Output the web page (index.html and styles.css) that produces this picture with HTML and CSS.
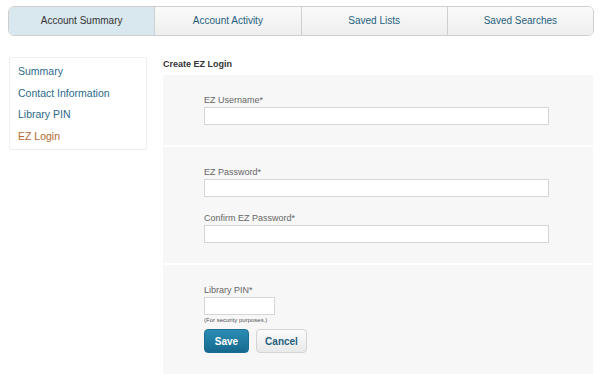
FILE: index.html
```html
<!DOCTYPE html>
<html>
<head>
    <title>Create EZ Login</title>
    <meta charset="utf-8">
    <link rel="stylesheet" href="styles.css">
</head>
<body>
    <div class="tabs">
        <div class="tab active">Account Summary</div>
        <div class="tab">Account Activity</div>
        <div class="tab">Saved Lists</div>
        <div class="tab">Saved Searches</div>
    </div>
    <div class="main">
        <div class="side">
            <a class="side-item">Summary</a>
            <a class="side-item">Contact Information</a>
            <a class="side-item">Library PIN</a>
            <a class="side-item current">EZ Login</a>
        </div>
        <div class="content">
            <div class="title">Create EZ Login</div>
            <div class="panel">
                <div class="section">
                    <label class="label">EZ Username*</label>
                    <input type="text" class="field"/>
                </div>
                <div class="section">
                    <label class="label">EZ Password*</label>
                    <input type="password" class="field"/>
                    <label class="label second">Confirm EZ Password*</label>
                    <input type="password" class="field"/>
                </div>
                <div class="section last">
                    <label class="label">Library PIN*</label>
                    <input type="password" class="field pin"/>
                    <div class="note">(For security purposes.)</div>
                    <div class="buttons">
                        <button class="btn save">Save</button>
                        <button class="btn cancel">Cancel</button>
                    </div>
                </div>
            </div>
        </div>
    </div>
</body>
</html>
```
FILE: styles.css
```css
*{
    padding: 0;
    margin: 0;
    box-sizing: border-box;
    font-family: "Liberation Sans", Arial, sans-serif;
}
body{
    background: #ffffff;
    padding: 6px 6px 0 8px;
    overflow: hidden;
}
.tabs{
    display: flex;
    width: 586px;
    height: 30px;
    border: 1px solid #cfcfcf;
    border-radius: 6px;
    overflow: hidden;
}
.tab{
    flex: 1;
    text-align: center;
    line-height: 28px;
    font-size: 10px;
    color: #1f5f7c;
    background: linear-gradient(#fafafa, #eeeeee);
    border-left: 1px solid #cfcfcf;
}
.tab:first-child{
    border-left: 0;
}
.tab.active{
    background: #d9e8ef;
    color: #333333;
}
.main{
    display: flex;
    margin-top: 21px;
}
.side{
    width: 138px;
    height: 93px;
    margin-left: 1px;
    border: 1px solid #eeeeee;
    border-radius: 2px;
    padding: 3px 0 0 8px;
}
.side-item{
    display: block;
    font-size: 10.5px;
    line-height: 21.5px;
    color: #2b6a8a;
}
.side-item.current{
    color: #b5692f;
}
.content{
    margin-left: 16px;
    width: 430px;
}
.title{
    font-size: 9px;
    font-weight: bold;
    color: #333333;
    line-height: 12px;
    margin-top: 1px;
    height: 17px;
}
.panel{
    background: #f7f7f7;
}
.section{
    padding: 19px 44px 20px 41px;
    border-bottom: 2px solid #ffffff;
}
.section.last{
    border-bottom: 0;
    padding-bottom: 30px;
}
.label{
    display: block;
    font-size: 9px;
    color: #666666;
    line-height: 12px;
}
.label.second{
    margin-top: 15px;
}
.field{
    display: block;
    width: 345px;
    height: 18px;
    border: 1px solid #d6d6d6;
    background: #ffffff;
    margin-top: 1px;
}
.field.pin{
    width: 71px;
}
.note{
    font-size: 6px;
    color: #555555;
    line-height: 9px;
    margin-top: 1px;
}
.buttons{
    display: flex;
    gap: 7px;
    margin-top: 4px;
}
.btn{
    height: 24px;
    border-radius: 4px;
    font-size: 10px;
    font-weight: bold;
}
.save{
    width: 45px;
    border: 1px solid #1b6e92;
    color: #ffffff;
    background: linear-gradient(#2a8db5, #17698e);
}
.cancel{
    width: 51px;
    border: 1px solid #d4d4d4;
    color: #1f5f7c;
    background: linear-gradient(#fbfbfb, #e9e9e9);
}
```
